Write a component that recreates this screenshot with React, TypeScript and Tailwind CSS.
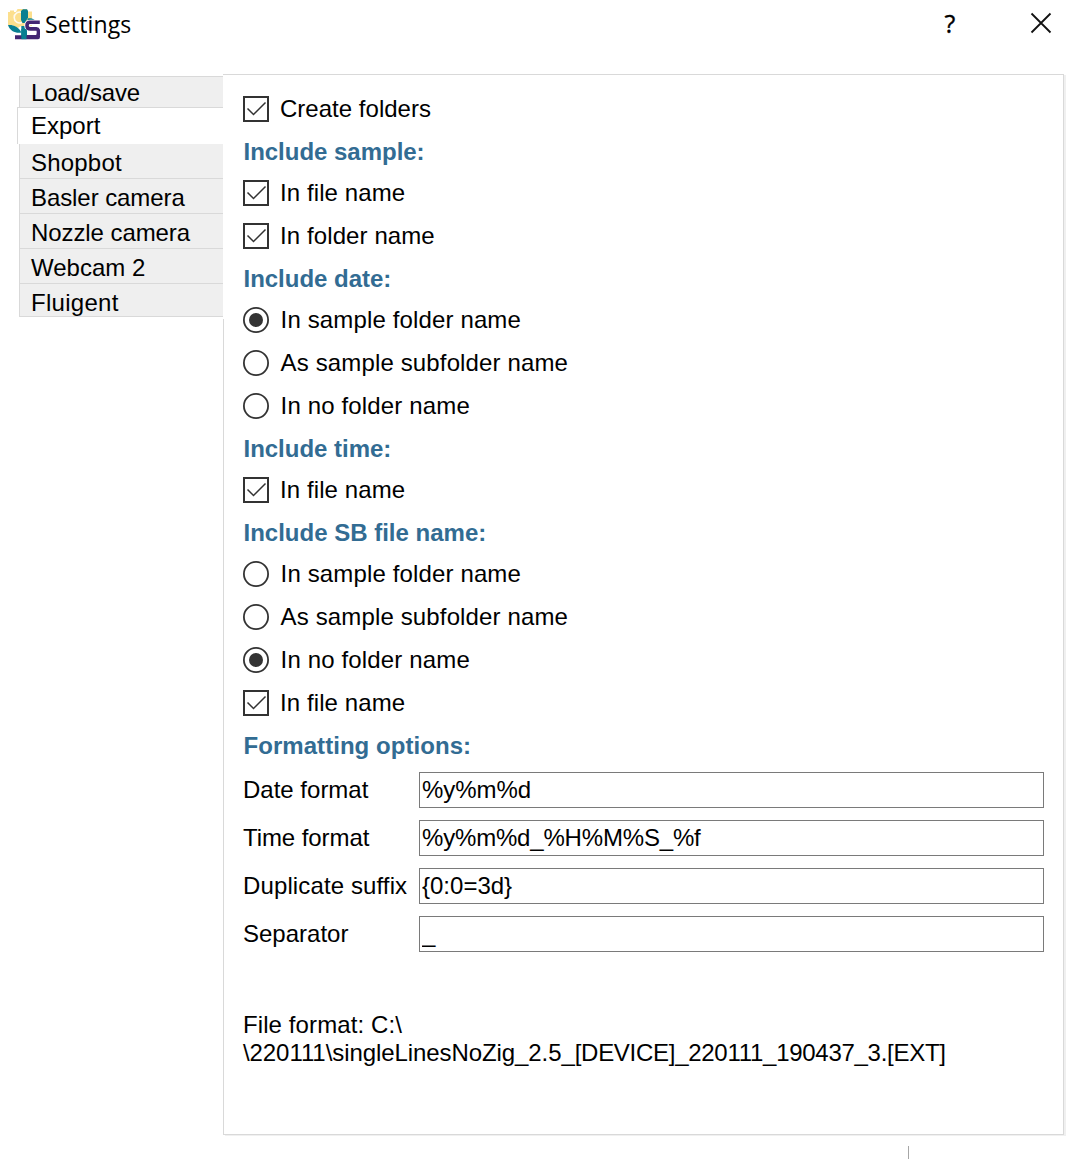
import { useState } from "react";

type Row =
  | { kind: "head"; text: string; cls: string }
  | { kind: "check"; text: string; cls: string }
  | { kind: "radio"; text: string; cls: string; on: boolean };

const rows: Row[] = [
  { kind: "check", text: "Create folders", cls: "tracking-[0.02px]" },
  { kind: "head", text: "Include sample:", cls: "tracking-[-0.02px]" },
  { kind: "check", text: "In file name", cls: "tracking-[0.1px]" },
  { kind: "check", text: "In folder name", cls: "tracking-[0.1px]" },
  { kind: "head", text: "Include date:", cls: "tracking-[-0.02px]" },
  { kind: "radio", text: "In sample folder name", cls: "tracking-[0.14px]", on: true },
  { kind: "radio", text: "As sample subfolder name", cls: "tracking-[0.14px]", on: false },
  { kind: "radio", text: "In no folder name", cls: "tracking-[0.15px]", on: false },
  { kind: "head", text: "Include time:", cls: "tracking-[-0.02px]" },
  { kind: "check", text: "In file name", cls: "tracking-[0.1px]" },
  { kind: "head", text: "Include SB file name:", cls: "tracking-[0px]" },
  { kind: "radio", text: "In sample folder name", cls: "tracking-[0.14px]", on: false },
  { kind: "radio", text: "As sample subfolder name", cls: "tracking-[0.14px]", on: false },
  { kind: "radio", text: "In no folder name", cls: "tracking-[0.15px]", on: true },
  { kind: "check", text: "In file name", cls: "tracking-[0.1px]" },
  { kind: "head", text: "Formatting options:", cls: "tracking-[0.05px]" },
];

const fields = [
  { label: "Date format", value: "%y%m%d", label_cls: "", cls: "tracking-[-0.05px]" },
  { label: "Time format", value: "%y%m%d_%H%M%S_%f", label_cls: "tracking-[-0.08px]", cls: "tracking-[-0.18px]" },
  { label: "Duplicate suffix", value: "{0:0=3d}", label_cls: "tracking-[0.12px]", cls: "" },
  { label: "Separator", value: "_", label_cls: "", cls: "" },
];

const tabs = [
  { name: "Load/save", box: "ml-[2px] h-[31px] border-t bg-[#efefef] pl-[11px] pt-[3px] tracking-[-0.2px]" },
  { name: "Export", box: "h-[37px] border-t bg-white pl-[13px] pt-[5px]" },
  { name: "Shopbot", box: "ml-[2px] h-[34px] bg-[#efefef] pl-[11px] pt-[6px] tracking-[0.2px]" },
  { name: "Basler camera", box: "ml-[2px] h-[35px] border-t bg-[#efefef] pl-[11px] pt-[6px] tracking-[-0.08px]" },
  { name: "Nozzle camera", box: "ml-[2px] h-[35px] border-t bg-[#efefef] pl-[11px] pt-[6px] tracking-[-0.08px]" },
  { name: "Webcam 2", box: "ml-[2px] h-[35px] border-t bg-[#efefef] pl-[11px] pt-[6px]" },
  { name: "Fluigent", box: "ml-[2px] h-[34px] border-y bg-[#efefef] pl-[11px] pt-[6px] tracking-[0.28px]" },
];

function Logo() {
  return (
    <svg className="ml-2 mt-2 h-8 w-8 shrink-0" viewBox="0 0 32 32">
      <path d="M0 4h2V2.500h4V4h2l1.500-3H19l1 2.500h4V18H13l-3 2-6-3H0z" fill="#fcdf8d" />
      <path d="M14 4.500a5.500 5.500 0 1 0 0 10" fill="none" stroke="#fffaf0" strokeWidth="1.600" />
      <path d="M13 3l2-1.800h4L20 3v6.500l-3 5.500h-2.500l-1.500-3z" fill="#087f91" />
      <path d="M0 17c5-.5 10 1 13.500 7.500C8 25.500 2 23.500 0 17z" fill="#087f91" />
      <path d="M19.500 10.500c4-1 7 .5 8.500 3H19.500z" fill="#087f91" />
      <path d="M13.300 18h5.700v11h-5.700z" fill="#087f91" />
      <path d="M32 14.500H22.500q-3.500 0-3.500 3t3.500 3.200" fill="none" stroke="#fff" strokeWidth="5.500" />
      <path d="M7 27.200h25V29q0 2.200-2 2.200H7z" fill="#432672" />
      <path d="M13.300 21h5.200v10.200h-5.200z" fill="#087f91" />
      <path d="M31.800 14.200H22q-3 0-3 3.200 0 3.500 3.500 3.500h6q2 0 2 3.500t-2 4.500H19" fill="none" stroke="#432672" strokeWidth="3.600" />
    </svg>
  );
}

function CheckBox() {
  return (
    <svg className="h-[26px] w-[26px] shrink-0" viewBox="0 0 26 26" fill="none" stroke="#333">
      <rect x="1" y="1" width="24" height="24" strokeWidth="2" />
      <path d="M4.500 12.500l6 6 12-12" strokeWidth="1.500" />
    </svg>
  );
}

function RadioButton({ on }: { on: boolean }) {
  return (
    <svg className="h-[26px] w-[26px] shrink-0" viewBox="0 0 26 26">
      <circle cx="13" cy="13" r="12.100" fill="none" stroke="#333" strokeWidth="1.800" />
      {on && <circle cx="13" cy="13" r="7" fill="#333" />}
    </svg>
  );
}

export default function App() {
  const [active, setActive] = useState("Export");
  return (
    <div className="flex h-[1159px] w-[1080px] flex-col overflow-hidden bg-white font-['Liberation_Sans',Arial,sans-serif] text-[24px] leading-[26px] text-black">
      <header className="flex h-[74px] items-start">
        <Logo />
        <h1 className="ml-[5px] mt-[8px] font-['Open_Sans',sans-serif] text-[23px] leading-[32px] tracking-[0.15px]">Settings</h1>
        <button className="ml-auto mr-[73px] mt-[7px] w-[14px] font-['Open_Sans',sans-serif] text-[25px] font-medium leading-[32px] [-webkit-text-stroke:0.4px_black]">?</button>
        <button aria-label="Close" className="mr-[28px] mt-[12px]">
          <svg className="h-[22px] w-[22px]" viewBox="0 0 22 22" stroke="#111" strokeWidth="1.800">
            <path d="M1.500 1.500l19 19M20.500 1.500l-19 19" />
          </svg>
        </button>
      </header>
      <div className="flex">
        <nav className="ml-[17px] mt-[2px] flex w-[206px] flex-col">
          {tabs.map((t) => (
            <button
              key={t.name}
              onClick={() => setActive(t.name)}
              aria-current={active === t.name}
              className={`flex items-start border-l border-[#d9d9d9] text-left ${t.box}`}
            >
              {t.name}
            </button>
          ))}
          <div className="-mr-px mt-[2px] h-[816px] border-r border-[#d9d9d9]" />
        </nav>
        <main className="h-[1061px] w-[841px] border-b border-r border-t border-[#d9d9d9] pl-[20px] pt-[21px] shadow-[2px_1px_0_#f0f0f0]">
          {rows.map((r, i) =>
            r.kind === "head" ? (
              <h2 key={i} className={`h-[41px] pl-[0.5px] font-bold text-[#326c93] ${r.cls}`}>{r.text}</h2>
            ) : (
              <div key={i} className="flex h-[43px] items-start">
                {r.kind === "check" ? <CheckBox /> : <RadioButton on={r.on} />}
                <span className={`${r.kind === "check" ? "ml-[11px]" : "ml-[11.6px]"} ${r.cls}`}>{r.text}</span>
              </div>
            ),
          )}
          <div className="-mt-[2px] flex flex-col gap-3">
            {fields.map((f) => (
              <label key={f.label} className="flex h-9 items-center">
                <span className={`w-[176px] shrink-0 whitespace-nowrap ${f.label_cls}`}>{f.label}</span>
                <input
                  defaultValue={f.value}
                  className={`h-9 w-[625px] border border-[#7a7a7a] bg-white pl-[2px] outline-none ${f.cls}`}
                />
              </label>
            ))}
          </div>
          <p className="mt-[59px] leading-[28px]">
            <span className="tracking-[0.1px]">File format: C:\</span>
            <br />
            <span className="tracking-[-0.08px]">\220111\singleLinesNoZig_2.5_</span>
            <span className="tracking-[-0.28px]">[DEVICE]_220111_190437_3.[EXT]</span>
          </p>
        </main>
      </div>
      <div className="ml-[908px] mt-[11px] h-[13px] w-px bg-[#a6a6a6]" />
    </div>
  );
}
